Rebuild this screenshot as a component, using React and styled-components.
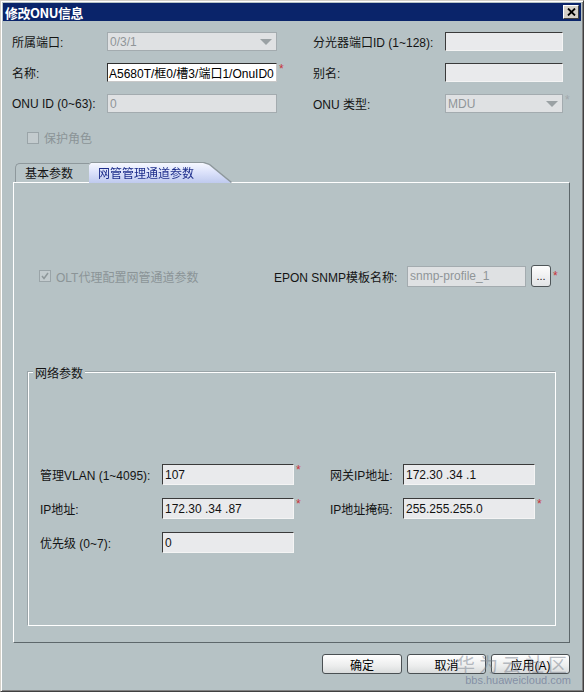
import React from 'react'
import styled, { createGlobalStyle, css } from 'styled-components'

const font = `"Liberation Sans", "Noto Sans CJK SC", sans-serif`

const GlobalStyle = createGlobalStyle`
  body {
    margin: 0;
    background: #b6c2c5;
  }
`

const Window = styled.div`
  position: relative;
  width: 584px;
  height: 692px;
  box-sizing: border-box;
  display: flex;
  flex-direction: column;
  padding: 2px;
  background: #b6c2c5;
  border: 1px solid;
  border-color: #d4d0c8 #404040 #404040 #d4d0c8;
  box-shadow: inset 1px 1px #fff, inset -1px -1px #808080;
  font: 12px ${font};
  color: #141414;
`

const TitleBar = styled.div`
  height: 18px;
  flex-shrink: 0;
  display: flex;
  align-items: center;
  justify-content: space-between;
  padding: 0 2px 0 2px;
  background: #0a246a;
  color: #fff;
  font: bold 13px "Noto Sans CJK SC", sans-serif;
  letter-spacing: -0.5px;
`

const CloseButton = styled.div`
  width: 16px;
  height: 14px;
  box-sizing: border-box;
  display: flex;
  align-items: center;
  justify-content: center;
  background: #d4d0c8;
  border: 1px solid;
  border-color: #fff #404040 #404040 #fff;
`

const TopForm = styled.div`
  display: grid;
  grid-template-columns: 95px 206px 132px 1fr;
  grid-auto-rows: 19px;
  row-gap: 12px;
  align-items: center;
  padding: 11px 0 0 9px;
`

const Label = styled.span`
  white-space: nowrap;
  color: ${p => (p.$muted ? '#8b9497' : '#141414')};
`

const FieldCell = styled.div`
  display: flex;
  align-items: flex-start;
`

const Box = styled.div`
  box-sizing: border-box;
  width: ${p => p.$w}px;
  height: ${p => p.$h || 19}px;
  display: flex;
  align-items: center;
  padding: 0 ${p => (p.$tight ? 1 : 2)}px;
  white-space: nowrap;
  overflow: hidden;
  position: relative;
  ${p =>
    p.$tone === 'disabled'
      ? css`
          background: #dfe1e3;
          border: 1px solid #a3abaf;
          color: #8f9598;
        `
      : p.$tone === 'white'
      ? css`
          background: #fff;
          border: 1px solid;
          border-color: #2e2e2e #c8c8c8 #c8c8c8 #2e2e2e;
          color: #000;
        `
      : css`
          background: #e9eaec;
          border: 1px solid;
          border-color: #3a3a3a #f4f4f4 #f4f4f4 #3a3a3a;
          color: #111;
        `}
`

const Arrow = styled.span`
  position: absolute;
  right: 4px;
  top: 6px;
  width: 0;
  height: 0;
  border-left: 6px solid transparent;
  border-right: 6px solid transparent;
  border-top: 6px solid #9aa1a4;
`

const Star = styled.span`
  margin-left: 2px;
  margin-top: -1px;
  font-size: 12px;
  color: ${p => (p.$muted ? '#a2a8ab' : '#c8343a')};
`

const CheckRow = styled.label`
  display: flex;
  align-items: center;
  gap: 5px;
  height: 13px;
  margin: ${p => p.$m || '0'};
  color: #8b9497;
  white-space: nowrap;
`

const CheckBox = styled.span`
  width: 12px;
  height: 12px;
  box-sizing: border-box;
  display: flex;
  align-items: center;
  justify-content: center;
  border: 1px solid #9aa4a8;
  background: #c3cbce;
`

const TabArea = styled.div`
  margin: 19px 11px 0 10px;
`

const TabStrip = styled.div`
  display: flex;
  align-items: flex-end;
  height: 19px;
  padding-left: 2px;
  position: relative;
  z-index: 1;
`

const Tab = styled.div`
  height: 19px;
  box-sizing: border-box;
  display: flex;
  align-items: center;
  padding: 0 16px 1px 9px;
  background: #b9c5c8;
  border-top: 1px solid #8e989c;
  border-left: 1px solid #8e989c;
  border-top-left-radius: 5px;
  color: #141414;
`

const ActiveTabEdge = styled.div`
  filter: drop-shadow(0 -1px 0 #8e989c) drop-shadow(1px 0 0 #8e989c);
  height: 20px;
  margin-bottom: -1px;
`

const ActiveTab = styled.div`
  width: 142px;
  height: 20px;
  box-sizing: border-box;
  display: flex;
  align-items: center;
  padding: 0 0 2px 9px;
  background: linear-gradient(#f6f8ff, #dde3fb 45%, #bfcaee);
  clip-path: polygon(0 2px, 2px 0, 114px 0, 120px 2px, 142px 100%, 0 100%);
  color: #1c2c8a;
`

const Panel = styled.div`
  height: 461px;
  box-sizing: border-box;
  padding: 82px 0 0 14px;
  border: 1px solid;
  border-color: #fff #5d676b #5d676b #fff;
`

const SnmpRow = styled.div`
  display: flex;
  align-items: center;
  height: 22px;
`

const SnmpLead = styled.div`
  width: 246px;
`

const SnmpLabel = styled.span`
  width: 133px;
  white-space: nowrap;
`

const DotsButton = styled.div`
  width: 20px;
  height: 22px;
  box-sizing: border-box;
  margin-left: 5px;
  display: flex;
  align-items: flex-end;
  justify-content: center;
  padding-bottom: 4px;
  background: linear-gradient(#fdfdfd, #e2e4e6);
  border: 1px solid #4e5558;
  border-radius: 3px;
  font-size: 11px;
  line-height: 1;
`

const Group = styled.div`
  position: relative;
  width: 528px;
  height: 254px;
  box-sizing: border-box;
  margin-top: 85px;
  padding: 91px 0 0 11px;
  border: 1px solid #fff;
  box-shadow: -1px -1px 0 #9aa4a8;
`

const GroupTitle = styled.span`
  position: absolute;
  top: -9px;
  left: 4px;
  padding: 0 2px;
  background: #b6c2c5;
  color: #141414;
`

const GroupGrid = styled.div`
  display: grid;
  grid-template-columns: 122px 168px 73px auto;
  grid-auto-rows: 21px;
  row-gap: 13px;
  align-items: center;
`

const ButtonRow = styled.div`
  display: flex;
  justify-content: flex-end;
  gap: 5px;
  margin-top: 11px;
  padding-right: 11px;
`

const Button = styled.div`
  width: ${p => p.$w || 79}px;
  height: 20px;
  box-sizing: border-box;
  display: flex;
  align-items: center;
  justify-content: center;
  background: linear-gradient(#ffffff, #eceded 60%, #d9dbdc);
  border: 1px solid #4a5053;
  border-radius: 3px;
  color: #000;
`

const Watermark = styled.div`
  position: absolute;
  right: 12px;
  bottom: 5px;
  display: flex;
  flex-direction: column;
  align-items: flex-end;
  pointer-events: none;
`

const WatermarkMark = styled.span`
  font: 19px "Noto Sans CJK SC", sans-serif;
  letter-spacing: 4px;
  color: rgba(120, 128, 140, 0.5);
  line-height: 22px;
`

const WatermarkSite = styled.span`
  font: 11px ${font};
  color: rgba(110, 120, 150, 0.7);
  line-height: 11px;
`

const Field = ({ w, h, tone, star, mutedStar, tight, children, select }) => (
  <FieldCell>
    <Box $w={w} $h={h} $tone={tone} $tight={tight}>
      {children}
      {select && <Arrow />}
    </Box>
    {star && <Star $muted={mutedStar}>*</Star>}
  </FieldCell>
)

export default function App() {
  return (
    <>
      <GlobalStyle />
      <Window>
        <TitleBar>
          <span>修改ONU信息</span>
          <CloseButton>
            <svg width="9" height="8" viewBox="0 0 9 8">
              <path d="M1 0.5 L8 7.5 M8 0.5 L1 7.5" stroke="#000" strokeWidth="1.8" />
            </svg>
          </CloseButton>
        </TitleBar>

        <TopForm>
          <Label>所属端口:</Label>
          <Field w={170} tone="disabled" select>0/3/1</Field>
          <Label>分光器端口ID (1~128):</Label>
          <Field w={118} tone="light" />

          <Label>名称:</Label>
          <Field w={170} tone="white" star tight>A5680T/框0/槽3/端口1/OnuID0</Field>
          <Label>别名:</Label>
          <Field w={118} tone="light" />

          <Label>ONU ID (0~63):</Label>
          <Field w={170} tone="disabled">0</Field>
          <Label>ONU 类型:</Label>
          <Field w={118} tone="disabled" select star mutedStar>MDU</Field>
        </TopForm>

        <CheckRow $m="18px 0 0 24px">
          <CheckBox />
          保护角色
        </CheckRow>

        <TabArea>
          <TabStrip>
            <Tab>基本参数</Tab>
            <ActiveTabEdge>
              <ActiveTab>网管管理通道参数</ActiveTab>
            </ActiveTabEdge>
          </TabStrip>
          <Panel>
            <SnmpRow>
              <SnmpLead>
                <CheckRow $m="0 0 0 11px">
                  <CheckBox>
                    <svg width="8" height="8" viewBox="0 0 8 8">
                      <path d="M1 4 L3 6.5 L7 1" stroke="#8e979a" strokeWidth="1.5" fill="none" />
                    </svg>
                  </CheckBox>
                  OLT代理配置网管通道参数
                </CheckRow>
              </SnmpLead>
              <SnmpLabel>EPON SNMP模板名称:</SnmpLabel>
              <Field w={119} h={21} tone="disabled">snmp-profile_1</Field>
              <DotsButton>...</DotsButton>
              <Star>*</Star>
            </SnmpRow>

            <Group>
              <GroupTitle>网络参数</GroupTitle>
              <GroupGrid>
                <Label>管理VLAN (1~4095):</Label>
                <Field w={132} h={21} tone="light" star>107</Field>
                <Label>网关IP地址:</Label>
                <Field w={132} h={21} tone="light">172.30 .34 .1</Field>

                <Label>IP地址:</Label>
                <Field w={132} h={21} tone="light" star>172.30 .34 .87</Field>
                <Label>IP地址掩码:</Label>
                <Field w={132} h={21} tone="light" star>255.255.255.0</Field>

                <Label>优先级 (0~7):</Label>
                <Field w={132} h={21} tone="light">0</Field>
              </GroupGrid>
            </Group>
          </Panel>
        </TabArea>

        <ButtonRow>
          <Button $w={80}>确定</Button>
          <Button>取消</Button>
          <Button>应用(A)</Button>
        </ButtonRow>

        <Watermark>
          <WatermarkMark>华为云社区</WatermarkMark>
          <WatermarkSite>bbs.huaweicloud.com</WatermarkSite>
        </Watermark>
      </Window>
    </>
  )
}
